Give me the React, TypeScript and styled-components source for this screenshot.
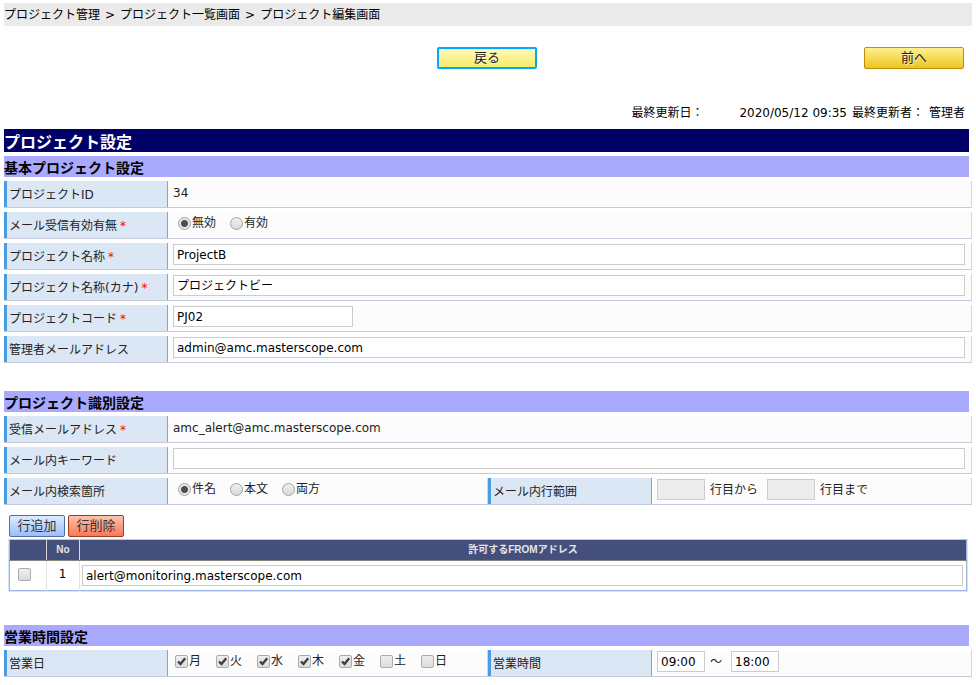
import React, { useState } from "react";
import styled, { createGlobalStyle } from "styled-components";

const GlobalStyle = createGlobalStyle`
  *, *::before, *::after { box-sizing: border-box; }
  body {
    margin: 0;
    background: #fff;
    color: #000;
    font: 12px/18px "DejaVu Sans", "Noto Sans CJK JP", sans-serif;
  }
  input, button { font: inherit; color: inherit; }
`;

const Page = styled.main`
  padding: 3px 4px 8px;
`;

const Breadcrumb = styled.nav`
  display: flex;
  gap: 5px;
  height: 23px;
  padding-top: 1px;
  line-height: 23px;
  background: #eaeaea;
`;

const Crumb = styled.a`
  color: inherit;
  text-decoration: none;
`;

const Toolbar = styled.div`
  display: grid;
  grid-template-columns: 1fr auto 1fr;
  padding: 0 8px 0 6px;
  margin-top: 21px;
`;

const NavButton = styled.button<{ $active?: boolean }>`
  width: 100px;
  height: 22px;
  padding: 0;
  font-size: 13px;
  line-height: 18px;
  border-radius: 2px;
  color: #222;
  text-shadow: 1px 1px 0 rgba(255, 255, 255, 0.6);
  border: ${(p) => (p.$active ? "2px solid #00a8ff" : "1px solid #c58a08")};
  background: ${(p) =>
    p.$active
      ? "linear-gradient(#fffabc, #f8ea68)"
      : "linear-gradient(#fdf08e, #ecc520)"};
  grid-column: ${(p) => (p.$active ? 2 : 3)};
  justify-self: ${(p) => (p.$active ? "center" : "end")};
`;

const Meta = styled.dl`
  display: flex;
  justify-content: flex-end;
  margin: 35px 0 7px;
  padding-right: 7px;

  dt, dd { margin: 0; }
  dd { margin-left: 5px; }
  dd + dt { margin-left: 5px; }
  dd:first-of-type { margin-left: 36px; }
`;

const Title = styled.h1`
  margin: 0 3px 4px 0;
  height: 23px;
  padding-top: 2px;
  background: #000066;
  color: #fff;
  font-size: 16px;
  line-height: 23px;
`;

const Section = styled.section`
  & + & { margin-top: 28px; }
`;

const SectionTitle = styled.h2`
  margin: 0 3px 4px 0;
  height: 21px;
  padding-top: 2px;
  background: #a9a9fd;
  font-size: 14px;
  line-height: 21px;
`;

const Rows = styled.div`
  display: grid;
  gap: 4px;
  color: #222;
`;

const Row = styled.div`
  display: flex;
`;

const Field = styled.div`
  flex: 1;
  display: flex;
  min-width: 0;
  height: 27px;
  border-right: 1px solid #d5d5de;
  border-bottom: 1px solid #c6cadc;
  background: #fcfcfc;
`;

const FieldLabel = styled.div`
  flex: none;
  width: 164px;
  padding: 5px 0 0 2px;
  border-left: 3px solid #4a9de0;
  border-right: 1px solid #8ba3bf;
  background: #dbe7f5;
  white-space: nowrap;
`;

const Required = styled.span`
  margin-left: 3px;
  color: #f00;
`;

const FieldValue = styled.div`
  flex: 1;
  display: flex;
  align-items: flex-start;
  min-width: 0;
  padding: 1px 6px 0 5px;
  line-height: 23px;
  white-space: nowrap;
`;

const TextInput = styled.input<{ $width?: number }>`
  width: ${(p) => (p.$width ? `${p.$width}px` : "100%")};
  height: 21px;
  padding: 1px 3px 0;
  border: 1px solid #ccc;
  border-radius: 0;
  outline: none;
  background: #fff;
  color: #000;
  &:disabled { background: #ececec; }
`;

const Unit = styled.span<{ $end: number }>`
  margin: 0 ${(p) => p.$end}px 0 5px;
`;

const Choices = styled.div<{ $start: number; $gap: number }>`
  display: flex;
  gap: ${(p) => p.$gap}px;
  padding-left: ${(p) => p.$start}px;
  line-height: 21px;
`;

const Choice = styled.label`
  display: flex;
  align-items: center;
  gap: 1px;
`;

const Radio = styled.input.attrs({ type: "radio" })`
  appearance: none;
  width: 13px;
  height: 13px;
  margin: 0;
  border: 1px solid #a3a3a3;
  border-radius: 50%;
  background: linear-gradient(#efefef, #dadada);
  &:checked {
    background: radial-gradient(circle, #4d4d4d 3px, transparent 4px), #e8e8e8;
  }
`;

const Check = styled.input.attrs({ type: "checkbox" })`
  appearance: none;
  display: block;
  width: 13px;
  height: 13px;
  margin: 0;
  border: 1px solid #acacac;
  border-radius: 2px;
  background: linear-gradient(#eeeeee, #dcdcdc);
`;

const CheckFrame = styled.span`
  display: grid;
  width: 13px;
  height: 13px;
  > * { grid-area: 1 / 1; }
  svg { pointer-events: none; visibility: hidden; z-index: 1; }
  input:checked + svg { visibility: visible; }
`;

const Actions = styled.div`
  display: flex;
  gap: 3px;
  margin: 10px 0 2px 5px;
`;

const ActionButton = styled.button<{ $danger?: boolean }>`
  width: 56px;
  height: 22px;
  padding: 0;
  border: 1px solid ${(p) => (p.$danger ? "#a23a1c" : "#4c6fa5")};
  border-radius: 2px;
  background: ${(p) =>
    p.$danger
      ? "linear-gradient(#fdc3ad, #f8785a)"
      : "linear-gradient(#dcebff, #9dbcf8)"};
  color: #333;
  font-size: 13px;
  line-height: 18px;
`;

const AddressFrame = styled.div`
  margin: 0 4px 33px;
  border: solid #d6e5fa;
  border-width: 0 1px 1px;
`;

const AddressTable = styled.table`
  width: 100%;
  border-collapse: collapse;
  table-layout: fixed;
  border: 1px solid #9cb7e4;
  border-top-color: #c9c7b8;

  th {
    height: 21px;
    padding: 0;
    border-right: 1px solid #d8d8d8;
    border-bottom: 1px solid #85857a;
    background: #444f7c;
    color: #e6e6e6;
    font: bold 10px/16px "Liberation Sans", "Noto Sans CJK JP", sans-serif;
  }
  td {
    height: 30px;
    padding: 4px 3px 0 2px;
    border-right: 1px solid #e4e4e4;
    text-align: center;
    vertical-align: top;
  }
  th:last-child, td:last-child { border-right-color: #9cb7e4; }
  td:first-child { padding: 7px 0 0 8px; }
  td > input { display: block; }
`;

const Col = styled.col<{ $width?: number }>`
  width: ${(p) => (p.$width ? `${p.$width}px` : "auto")};
`;

function CheckBox(props: { label?: string; on?: boolean }) {
  return (
    <CheckFrame>
      <Check aria-label={props.label} defaultChecked={props.on} />
      <svg width="13" height="13" viewBox="0 0 13 13" aria-hidden="true">
        <path d="M3 6.5 L5.5 9 L10.2 3.2" fill="none" stroke="#404040" strokeWidth="2.4" />
      </svg>
    </CheckFrame>
  );
}

function FormField(props: {
  label: string;
  htmlFor?: string;
  required?: boolean;
  children: React.ReactNode;
}) {
  return (
    <Field>
      <FieldLabel>
        {props.htmlFor ? <label htmlFor={props.htmlFor}>{props.label}</label> : props.label}
        {props.required && <Required>*</Required>}
      </FieldLabel>
      <FieldValue>{props.children}</FieldValue>
    </Field>
  );
}

function RadioGroup(props: { name: string; label: string; options: string[] }) {
  const [value, setValue] = useState(props.options[0]);
  return (
    <Choices role="radiogroup" aria-label={props.label} $start={5} $gap={14}>
      {props.options.map((option) => (
        <Choice key={option}>
          <Radio
            name={props.name}
            checked={value === option}
            onChange={() => setValue(option)}
          />
          {option}
        </Choice>
      ))}
    </Choices>
  );
}

const days = ["月", "火", "水", "木", "金", "土", "日"];

export default function App() {
  return (
    <>
      <GlobalStyle />
      <Page>
        <Breadcrumb aria-label="パンくず">
          <Crumb href="#projects">プロジェクト管理</Crumb>
          <span>&gt;</span>
          <Crumb href="#list">プロジェクト一覧画面</Crumb>
          <span>&gt;</span>
          <Crumb href="#edit">プロジェクト編集画面</Crumb>
        </Breadcrumb>

        <Toolbar>
          <NavButton type="button" $active>戻る</NavButton>
          <NavButton type="button">前へ</NavButton>
        </Toolbar>

        <Meta>
          <dt>最終更新日：</dt>
          <dd>2020/05/12 09:35</dd>
          <dt>最終更新者：</dt>
          <dd>管理者</dd>
        </Meta>

        <Title>プロジェクト設定</Title>

        <Section>
          <SectionTitle>基本プロジェクト設定</SectionTitle>
          <Rows>
            <Row>
              <FormField label="プロジェクトID">34</FormField>
            </Row>
            <Row>
              <FormField label="メール受信有効有無" required>
                <RadioGroup name="receive" label="メール受信有効有無" options={["無効", "有効"]} />
              </FormField>
            </Row>
            <Row>
              <FormField label="プロジェクト名称" htmlFor="name" required>
                <TextInput id="name" defaultValue="ProjectB" />
              </FormField>
            </Row>
            <Row>
              <FormField label="プロジェクト名称(カナ)" htmlFor="kana" required>
                <TextInput id="kana" defaultValue="プロジェクトビー" />
              </FormField>
            </Row>
            <Row>
              <FormField label="プロジェクトコード" htmlFor="code" required>
                <TextInput id="code" $width={180} defaultValue="PJ02" />
              </FormField>
            </Row>
            <Row>
              <FormField label="管理者メールアドレス" htmlFor="admin">
                <TextInput id="admin" defaultValue="admin@amc.masterscope.com" />
              </FormField>
            </Row>
          </Rows>
        </Section>

        <Section>
          <SectionTitle>プロジェクト識別設定</SectionTitle>
          <Rows>
            <Row>
              <FormField label="受信メールアドレス" required>
                amc_alert@amc.masterscope.com
              </FormField>
            </Row>
            <Row>
              <FormField label="メール内キーワード" htmlFor="keyword">
                <TextInput id="keyword" />
              </FormField>
            </Row>
            <Row>
              <FormField label="メール内検索箇所">
                <RadioGroup name="target" label="メール内検索箇所" options={["件名", "本文", "両方"]} />
              </FormField>
              <FormField label="メール内行範囲" htmlFor="from-line">
                <TextInput id="from-line" $width={48} disabled />
                <Unit $end={9}>行目から</Unit>
                <TextInput aria-label="行目まで" $width={48} disabled />
                <Unit $end={0}>行目まで</Unit>
              </FormField>
            </Row>
          </Rows>

          <Actions>
            <ActionButton type="button">行追加</ActionButton>
            <ActionButton type="button" $danger>行削除</ActionButton>
          </Actions>
          <AddressFrame>
            <AddressTable>
              <colgroup>
                <Col $width={37} />
                <Col $width={33} />
                <Col />
              </colgroup>
              <thead>
                <tr>
                  <th aria-label="選択" />
                  <th>No</th>
                  <th>許可するFROMアドレス</th>
                </tr>
              </thead>
              <tbody>
                <tr>
                  <td><CheckBox label="1行目を選択" /></td>
                  <td>1</td>
                  <td>
                    <TextInput
                      aria-label="許可するFROMアドレス"
                      defaultValue="alert@monitoring.masterscope.com"
                    />
                  </td>
                </tr>
              </tbody>
            </AddressTable>
          </AddressFrame>
        </Section>

        <Section>
          <SectionTitle>営業時間設定</SectionTitle>
          <Rows>
            <Row>
              <FormField label="営業日">
                <Choices role="group" aria-label="営業日" $start={2} $gap={15}>
                  {days.map((day, index) => (
                    <Choice key={day}>
                      <CheckBox on={index < 5} />
                      {day}
                    </Choice>
                  ))}
                </Choices>
              </FormField>
              <FormField label="営業時間" htmlFor="open">
                <TextInput id="open" $width={48} defaultValue="09:00" />
                <Unit $end={9}>～</Unit>
                <TextInput aria-label="終了時刻" $width={48} defaultValue="18:00" />
              </FormField>
            </Row>
          </Rows>
        </Section>
      </Page>
    </>
  );
}
